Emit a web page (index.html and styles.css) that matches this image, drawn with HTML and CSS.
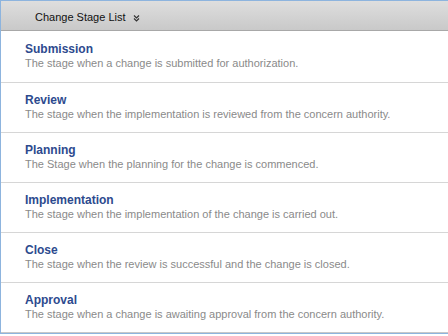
FILE: index.html
```html
<!DOCTYPE html>
<html lang="en">
<head>
    <meta charset="UTF-8">
    <title>Change Stage List</title>
    <link rel="stylesheet" href="styles.css">
</head>
<body>
    <div class="panel">
        <!-- Header -->
        <div class="panel-header">
            <span class="panel-title">Change Stage List</span>
            <svg class="chevrons" width="7" height="8" viewBox="0 0 7 8">
                <path d="M1 1.5 L3.5 4 L6 1.5 M1 4.5 L3.5 7 L6 4.5" fill="none" stroke="#333" stroke-width="1.2"/>
            </svg>
        </div>

        <!-- Stages -->
        <ul class="stage-list">
            <li class="stage">
                <div class="stage-name">Submission</div>
                <div class="stage-desc">The stage when a change is submitted for authorization.</div>
            </li>
            <li class="stage">
                <div class="stage-name">Review</div>
                <div class="stage-desc">The stage when the implementation is reviewed from the concern authority.</div>
            </li>
            <li class="stage">
                <div class="stage-name">Planning</div>
                <div class="stage-desc">The Stage when the planning for the change is commenced.</div>
            </li>
            <li class="stage">
                <div class="stage-name">Implementation</div>
                <div class="stage-desc">The stage when the implementation of the change is carried out.</div>
            </li>
            <li class="stage">
                <div class="stage-name">Close</div>
                <div class="stage-desc">The stage when the review is successful and the change is closed.</div>
            </li>
            <li class="stage">
                <div class="stage-name">Approval</div>
                <div class="stage-desc">The stage when a change is awaiting approval from the concern authority.</div>
            </li>
        </ul>
    </div>
</body>
</html>
```

FILE: styles.css
```css
body {
    margin: 0;
    font-family: "Liberation Sans", Arial, sans-serif;
    background: #fff;
}

.panel {
    width: 460px;
    border: 1px solid #8db4de;
    background: #fff;
}

/* Header */
.panel-header {
    display: flex;
    align-items: center;
    height: 30px;
    box-sizing: border-box;
    padding: 2px 0 0 34px;
    background: linear-gradient(#dedede, #c9c9c9);
    border-bottom: 1px solid #a8a8a8;
    font-size: 11px;
    color: #111;
}

.chevrons {
    margin-left: 7px;
    margin-top: 2px;
}

/* Stage list */
.stage-list {
    list-style: none;
    margin: 0;
    padding: 0;
}

.stage {
    height: 50px;
    padding: 10px 0 0 24px;
    box-sizing: border-box;
    border-bottom: 1px solid #d6d6d6;
}

.stage:first-child {
    height: 52px;
    padding-top: 11px;
}

.stage:last-child {
    border-bottom: 1px solid #c8c8c8;
}

.stage-name {
    font-size: 12px;
    font-weight: bold;
    color: #2d4a8e;
    line-height: 14px;
}

.stage-desc {
    font-size: 11px;
    color: #8a8a8a;
    line-height: 14px;
}
```
